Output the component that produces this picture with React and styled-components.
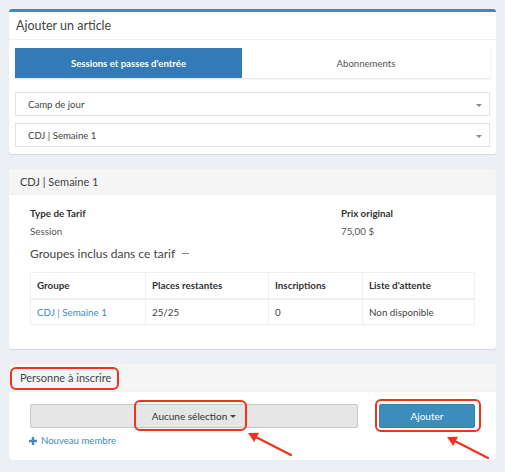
import React from 'react';
import styled, { createGlobalStyle } from 'styled-components';

const Global = createGlobalStyle`
  html, body {
    margin: 0;
    background: #ecf0f5;
    font-family: Lato, "Open Sans", sans-serif;
    color: #444;
  }
  * { box-sizing: border-box; }
`;

const Page = styled.div`
  padding: 9px 9px 0 9px;
  display: flex;
  flex-direction: column;
  gap: 15px;
  width: 505px;
`;

const Box = styled.div`
  background: #fff;
  border-radius: 3px;
  border-top: ${p => (p.$primary ? '3px solid #3c8dbc' : '0')};
  box-shadow: 0 1px 1px rgba(0, 0, 0, 0.1);
  position: relative;
`;

const BoxHeader = styled.div`
  height: ${p => p.$h || '28px'};
  padding: 0 ${p => (p.$grey ? '11px' : '7px')};
  display: flex;
  align-items: center;
  background: ${p => (p.$grey ? '#f5f5f5' : '#fff')};
  border-bottom: 1px solid #f1f1f1;
  border-radius: 3px 3px 0 0;
  font-size: ${p => (p.$grey ? '11px' : '12.5px')};
  color: #444;
`;

const BoxBody = styled.div`
  padding: ${p => p.$pad || '8px 6px 7px'};
`;

const Tabs = styled.div`
  display: flex;
  height: 30px;
  box-shadow: 0 1px 2px rgba(0, 0, 0, 0.12);
  margin-bottom: 14px;
`;

const Tab = styled.div`
  flex: ${p => (p.$active ? '0 0 227px' : '1')};
  display: flex;
  align-items: center;
  justify-content: center;
  font-size: 9.6px;
  font-weight: ${p => (p.$active ? 700 : 400)};
  background: ${p => (p.$active ? '#337ab7' : '#fff')};
  color: ${p => (p.$active ? '#fff' : '#555')};
`;

const Selects = styled.div`
  display: flex;
  flex-direction: column;
  gap: 7px;
`;

const Select = styled.div`
  height: 24px;
  border: 1px solid #e3e3e3;
  display: flex;
  align-items: center;
  justify-content: space-between;
  padding: 0 7px 0 12px;
  font-size: 9.6px;
  color: #444;
`;

const Caret = styled.span`
  width: 0;
  height: 0;
  border-left: 3px solid transparent;
  border-right: 3px solid transparent;
  border-top: ${p => (p.$dark ? '3px solid #444' : '3px solid #888')};
  display: inline-block;
  margin-top: ${p => (p.$dark ? '0' : '3px')};
`;

const InfoGrid = styled.div`
  display: grid;
  grid-template-columns: 311px 1fr;
  row-gap: 6px;
  font-size: 9.8px;
  line-height: 12px;
`;

const Label = styled.div`
  font-weight: 700;
  color: #333;
`;

const Value = styled.div`
  color: #555;
`;

const SubTitle = styled.div`
  font-size: 12px;
  line-height: 15px;
  color: #444;
  margin: 9px 0 11px;
  display: flex;
  align-items: center;
  gap: 5px;
`;

const Dash = styled.span`
  width: 7px;
  height: 1px;
  background: #888;
  display: inline-block;
  margin-left: 2px;
`;

const Table = styled.table`
  width: 100%;
  border-collapse: collapse;
  font-size: 9.8px;
  border: 1px solid #f0f0f0;
`;

const Th = styled.th`
  text-align: left;
  font-weight: 700;
  color: #333;
  height: 26px;
  padding: 0 6px;
  border: 1px solid #f0f0f0;
  border-bottom: 2px solid #f0f0f0;
  width: ${p => p.$w || 'auto'};
`;

const Td = styled.td`
  height: 26px;
  padding: 0 6px;
  border: 1px solid #f0f0f0;
  color: ${p => (p.$link ? '#3c8dbc' : '#444')};
`;

const PersonRow = styled.div`
  display: flex;
  align-items: center;
  gap: 21px;
`;

const DropButton = styled.div`
  width: 328px;
  height: 24px;
  background: #e6e6e6;
  border: 1px solid #c8c8c8;
  border-radius: 2px;
  display: flex;
  align-items: center;
  justify-content: center;
  font-size: 10px;
  line-height: 12px;
  color: #333;
`;

const AddButton = styled.div`
  width: 96px;
  height: 24px;
  background: #3c8dbc;
  border: 1px solid #367fa9;
  border-radius: 2px;
  color: #fff;
  font-size: 10px;
  display: flex;
  align-items: center;
  justify-content: center;
`;

const NewMember = styled.div`
  display: flex;
  align-items: center;
  gap: 4px;
  color: #3c8dbc;
  font-size: 9.6px;
  margin-top: 7px;
  margin-left: -1px;
`;

const Marked = styled.span`
  position: relative;
  display: inline-flex;
  align-items: center;
  gap: 3px;
  line-height: 12px;
  &::after {
    content: '';
    position: absolute;
    left: ${p => p.$l};
    right: ${p => p.$r};
    top: ${p => p.$t};
    bottom: ${p => p.$b};
    border: 2px solid #f0321e;
    border-radius: 6px;
  }
`;

const Arrows = styled.svg`
  position: absolute;
  left: 0;
  top: 0;
  pointer-events: none;
`;

const Arrow = ({ x1, y1, x2, y2 }) => {
  const a = Math.atan2(y2 - y1, x2 - x1);
  const l = 11;
  const s = 0.5;
  const p1 = [x2 - l * Math.cos(a - s), y2 - l * Math.sin(a - s)];
  const p2 = [x2 - l * Math.cos(a + s), y2 - l * Math.sin(a + s)];
  return (
    <g>
      <line x1={x1} y1={y1} x2={x2 - 6 * Math.cos(a)} y2={y2 - 6 * Math.sin(a)} stroke="#f0321e" strokeWidth="2.2" strokeLinecap="round" />
      <polygon points={`${x2},${y2} ${p1[0]},${p1[1]} ${p2[0]},${p2[1]}`} fill="#f0321e" />
    </g>
  );
};

export default function App() {
  return (
    <>
      <Global />
      <Page>
        <Box $primary>
          <BoxHeader>Ajouter un article</BoxHeader>
          <BoxBody>
            <Tabs>
              <Tab $active>Sessions et passes d'entrée</Tab>
              <Tab>Abonnements</Tab>
            </Tabs>
            <Selects>
              <Select>Camp de jour <Caret /></Select>
              <Select>CDJ | Semaine 1 <Caret /></Select>
            </Selects>
          </BoxBody>
        </Box>

        <Box>
          <BoxHeader $grey $h="26px">CDJ | Semaine 1</BoxHeader>
          <BoxBody $pad="12px 21px 24px">
            <InfoGrid>
              <Label>Type de Tarif</Label>
              <Label>Prix original</Label>
              <Value>Session</Value>
              <Value>75,00 $</Value>
            </InfoGrid>
            <SubTitle>Groupes inclus dans ce tarif <Dash /></SubTitle>
            <Table>
              <thead>
                <tr>
                  <Th $w="115px">Groupe</Th>
                  <Th $w="123px">Places restantes</Th>
                  <Th $w="94px">Inscriptions</Th>
                  <Th>Liste d'attente</Th>
                </tr>
              </thead>
              <tbody>
                <tr>
                  <Td $link>CDJ | Semaine 1</Td>
                  <Td>25/25</Td>
                  <Td>0</Td>
                  <Td>Non disponible</Td>
                </tr>
              </tbody>
            </Table>
          </BoxBody>
        </Box>

        <Box>
          <BoxHeader $grey $h="28px">
            <Marked $l="-10px" $r="-8px" $t="-5px" $b="-6px">Personne à inscrire</Marked>
          </BoxHeader>
          <BoxBody $pad="12px 21px 14px">
            <PersonRow>
              <DropButton>
                <Marked $l="-18px" $r="-11px" $t="-10px" $b="-9px">
                  Aucune sélection <Caret $dark />
                </Marked>
              </DropButton>
              <Marked $l="-4px" $r="-6px" $t="-5px" $b="-4px">
                <AddButton>Ajouter</AddButton>
              </Marked>
            </PersonRow>
            <NewMember>
              <svg width="8" height="8" viewBox="0 0 10 10">
                <path d="M3.5 0h3v3.5H10v3H6.5V10h-3V6.5H0v-3h3.5z" fill="#3c8dbc" />
              </svg>
              Nouveau membre
            </NewMember>
          </BoxBody>
          <Arrows width="496" height="98" viewBox="0 0 496 98">
            <Arrow x1={282} y1={91} x2={239} y2={69} />
            <Arrow x1={479} y1={94} x2={438} y2={73} />
          </Arrows>
        </Box>
      </Page>
    </>
  );
}
